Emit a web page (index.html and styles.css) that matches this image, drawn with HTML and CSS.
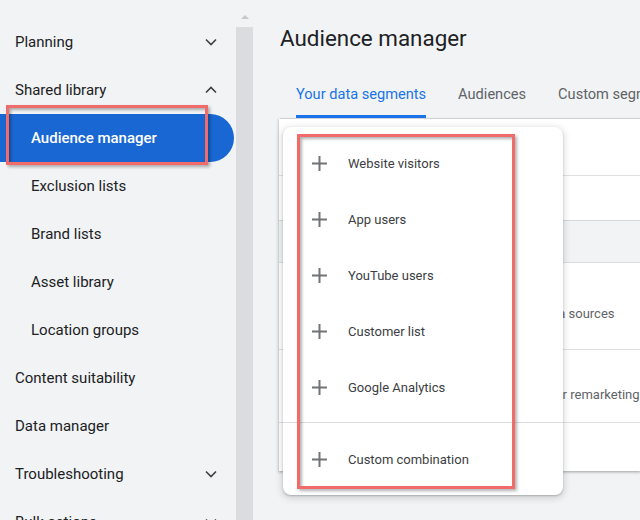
FILE: index.html
```html
<!DOCTYPE html>
<html lang="en">
<head>
<meta charset="utf-8">
<title>Audience manager</title>
<link rel="stylesheet" href="styles.css">
</head>
<body>
<div class="app">
  <nav class="sidebar">
    <div class="nav-item">Planning
      <svg class="chev" viewBox="0 0 12 8" width="12" height="8"><polyline points="1,1.5 6,6.5 11,1.5"/></svg>
    </div>
    <div class="nav-item">Shared library
      <svg class="chev" viewBox="0 0 12 8" width="12" height="8"><polyline points="1,6.5 6,1.5 11,6.5"/></svg>
    </div>
    <div class="nav-item sub active">Audience manager</div>
    <div class="nav-item sub">Exclusion lists</div>
    <div class="nav-item sub">Brand lists</div>
    <div class="nav-item sub">Asset library</div>
    <div class="nav-item sub">Location groups</div>
    <div class="nav-item">Content suitability</div>
    <div class="nav-item">Data manager</div>
    <div class="nav-item">Troubleshooting
      <svg class="chev" viewBox="0 0 12 8" width="12" height="8"><polyline points="1,1.5 6,6.5 11,1.5"/></svg>
    </div>
    <div class="nav-item">Bulk actions
      <svg class="chev" viewBox="0 0 12 8" width="12" height="8"><polyline points="1,1.5 6,6.5 11,1.5"/></svg>
    </div>
    <div class="annot annot-nav"></div>
  </nav>

  <div class="scrollbar">
    <div class="scroll-up"><span class="tri"></span></div>
    <div class="track"></div>
  </div>

  <main class="main">
    <h1 class="title">Audience manager</h1>
    <div class="tabs">
      <div class="tab active"><span class="tab-label">Your data segments</span></div>
      <div class="tab"><span class="tab-label">Audiences</span></div>
      <div class="tab"><span class="tab-label">Custom segments</span></div>
    </div>

    <div class="card">
      <div class="row row-toolbar"></div>
      <div class="row row-filter"></div>
      <div class="row row-head"></div>
      <div class="row row-a"><span class="desc">Combined online data sources</span></div>
      <div class="row row-b"><span class="desc">Visitors added by your remarketing tag</span></div>
      <div class="row row-c"></div>
    </div>

    <div class="menu">
      <div class="menu-item">
        <svg class="plus" viewBox="0 0 17 17" width="17" height="17"><path d="M8.5 1v15M1 8.5h15"/></svg>
        <span>Website visitors</span>
      </div>
      <div class="menu-item">
        <svg class="plus" viewBox="0 0 17 17" width="17" height="17"><path d="M8.5 1v15M1 8.5h15"/></svg>
        <span>App users</span>
      </div>
      <div class="menu-item">
        <svg class="plus" viewBox="0 0 17 17" width="17" height="17"><path d="M8.5 1v15M1 8.5h15"/></svg>
        <span>YouTube users</span>
      </div>
      <div class="menu-item">
        <svg class="plus" viewBox="0 0 17 17" width="17" height="17"><path d="M8.5 1v15M1 8.5h15"/></svg>
        <span>Customer list</span>
      </div>
      <div class="menu-item">
        <svg class="plus" viewBox="0 0 17 17" width="17" height="17"><path d="M8.5 1v15M1 8.5h15"/></svg>
        <span>Google Analytics</span>
      </div>
      <div class="menu-divider"></div>
      <div class="menu-item">
        <svg class="plus" viewBox="0 0 17 17" width="17" height="17"><path d="M8.5 1v15M1 8.5h15"/></svg>
        <span>Custom combination</span>
      </div>
      <div class="annot annot-menu"></div>
    </div>
  </main>
</div>
</body>
</html>
```

FILE: styles.css
```css
* { box-sizing: border-box; }

body {
  margin: 0;
  font-family: Roboto, "Liberation Sans", Arial, sans-serif;
  background: #f1f3f4;
  color: #202124;
}

.app {
  display: flex;
  height: 520px;
  overflow: hidden;
}

/* Sidebar */
.sidebar {
  position: relative;
  width: 236px;
  flex: none;
  padding-top: 18px;
}

.nav-item {
  height: 48px;
  flex: none;
  display: flex;
  align-items: center;
  justify-content: space-between;
  padding: 0 19px 0 15px;
  font-size: 15px;
  color: #202124;
  white-space: nowrap;
}

.nav-item.sub { padding-left: 31px; }

.nav-item.active {
  background: #1967d2;
  color: #fff;
  font-weight: 500;
  border-radius: 0 24px 24px 0;
  margin-right: 2px;
}

.chev {
  fill: none;
  stroke: #3c4043;
  stroke-width: 1.6;
}

/* Scrollbar */
.scrollbar {
  width: 17px;
  flex: none;
  display: flex;
  flex-direction: column;
}

.scroll-up {
  height: 27px;
  display: flex;
  justify-content: center;
  padding-top: 15px;
}

.tri {
  width: 0;
  height: 0;
  border-left: 4px solid transparent;
  border-right: 4px solid transparent;
  border-bottom: 4px solid #c6c8cb;
}

.track {
  flex: 1;
  background: #dadce0;
}

/* Main */
.main {
  position: relative;
  flex: 1;
  min-width: 0;
  padding: 24px 0 0 27px;
}

.title {
  margin: 0;
  font-size: 22.4px;
  font-weight: 400;
  line-height: 28px;
  color: #202124;
  white-space: nowrap;
}

.tabs {
  display: flex;
  margin-top: 18px;
  height: 49px;
  border-bottom: 1px solid #dadce0;
}

.tab {
  display: flex;
  padding: 0 16px;
}

.tab-label {
  display: flex;
  align-items: center;
  border-top: 3px solid transparent;
  border-bottom: 3px solid transparent;
  font-size: 14.6px;
  color: #5f6368;
  white-space: nowrap;
}

.tab.active .tab-label {
  color: #1a73e8;
  border-bottom-color: #1a73e8;
}

/* Card behind the menu */
.card {
  background: #fff;
  margin-left: -1px;
  box-shadow: 0 1px 2px rgba(60, 64, 67, 0.3), 0 1px 3px 1px rgba(60, 64, 67, 0.12);
}

.row {
  border-bottom: 1px solid #e0e0e0;
  font-size: 13px;
  color: #5f6368;
  white-space: nowrap;
  padding-left: 160px;
}

.row-toolbar { height: 57px; }
.row-filter { height: 45px; border-bottom-color: #d6d8db; }
.row-head { height: 42px; background: #f1f3f4; border-bottom-color: #dadce0; }
.row-a { height: 87px; padding-top: 42px; }
.row-b { height: 73px; padding-top: 36px; }
.row-c { height: 48px; border-bottom: none; }

.desc { line-height: 18px; }

/* Dropdown menu */
.menu {
  position: absolute;
  left: 30px;
  top: 127px;
  width: 280px;
  background: #fff;
  border-radius: 8px;
  padding: 8px 0;
  box-shadow: 0 2px 6px 2px rgba(60, 64, 67, 0.15), 0 1px 2px rgba(60, 64, 67, 0.3);
}

.menu-item {
  height: 56px;
  display: flex;
  align-items: center;
  gap: 20px;
  padding-left: 28px;
  font-size: 13px;
  color: #3c4043;
}

.plus {
  flex: none;
  fill: none;
  stroke: #707377;
  stroke-width: 2;
}

.menu-divider {
  height: 1px;
  background: #dadce0;
  margin: 7px 0 8px;
}

/* Red annotation frames */
.annot {
  position: absolute;
  border: 3px solid #f26b6b;
  box-shadow: 2px 2px 3px rgba(0, 0, 0, 0.3), inset 2px 2px 3px rgba(0, 0, 0, 0.3);
  pointer-events: none;
}

.annot-nav {
  left: 6px;
  top: 105px;
  width: 202px;
  height: 60px;
}

.annot-menu {
  left: 14px;
  top: 7px;
  width: 218px;
  height: 355px;
}
```
